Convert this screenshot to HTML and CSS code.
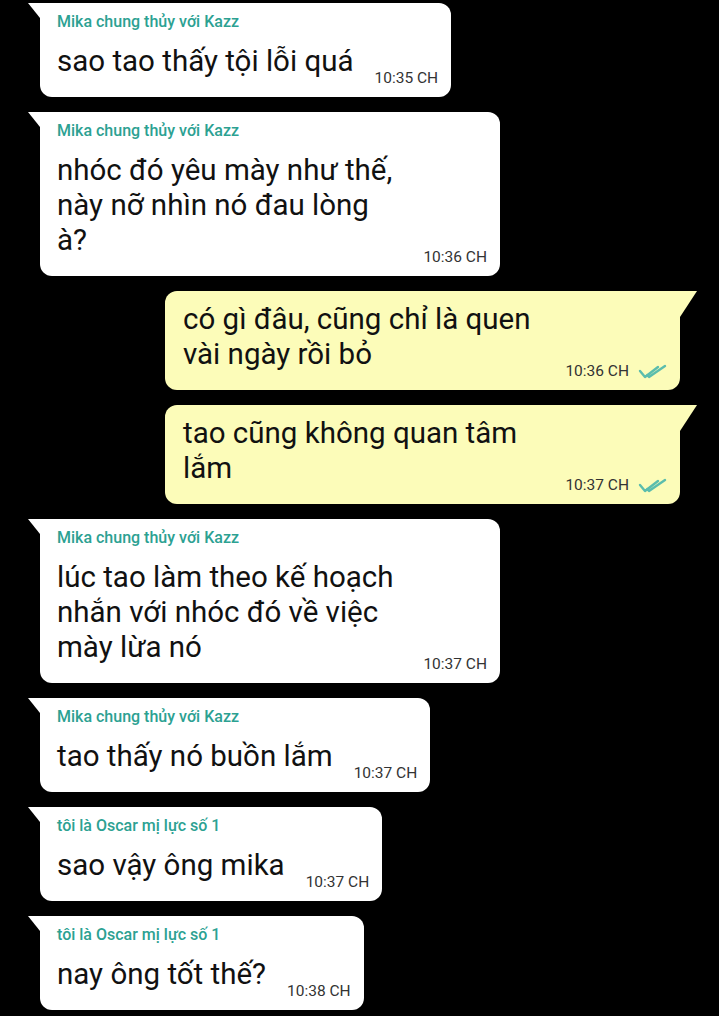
FILE: index.html
```html
<!DOCTYPE html>
<html lang="vi">

<head>
    <meta charset="UTF-8">
    <meta name="viewport" content="width=device-width, initial-scale=1.0">
    <title>Chat</title>
    <link rel="stylesheet" href="styles.css">
</head>

<body>
    <div class="chat">
        <div class="msg in">
            <div class="name">Mika chung thủy với Kazz</div>
            <div class="row">
                <div class="text">sao tao thấy tội lỗi quá</div>
                <span class="time">10:35 CH</span>
            </div>
        </div>

        <div class="msg in wide">
            <div class="name">Mika chung thủy với Kazz</div>
            <div class="row">
                <div class="text">nhóc đó yêu mày như thế,<br>này nỡ nhìn nó đau lòng<br>à?</div>
                <span class="time">10:36 CH</span>
            </div>
        </div>

        <div class="msg out wide">
            <div class="row">
                <div class="text">có gì đâu, cũng chỉ là quen<br>vài ngày rồi bỏ</div>
                <span class="time">10:36 CH
                    <svg class="check" width="30" height="16" viewBox="0 0 30 16">
                        <path d="M2 7 L7 13 L20 3 M9 11 L11 13 L27 2" />
                    </svg>
                </span>
            </div>
        </div>

        <div class="msg out wide">
            <div class="row">
                <div class="text">tao cũng không quan tâm<br>lắm</div>
                <span class="time">10:37 CH
                    <svg class="check" width="30" height="16" viewBox="0 0 30 16">
                        <path d="M2 7 L7 13 L20 3 M9 11 L11 13 L27 2" />
                    </svg>
                </span>
            </div>
        </div>

        <div class="msg in wide">
            <div class="name">Mika chung thủy với Kazz</div>
            <div class="row">
                <div class="text">lúc tao làm theo kế hoạch<br>nhắn với nhóc đó về việc<br>mày lừa nó</div>
                <span class="time">10:37 CH</span>
            </div>
        </div>

        <div class="msg in">
            <div class="name">Mika chung thủy với Kazz</div>
            <div class="row">
                <div class="text">tao thấy nó buồn lắm</div>
                <span class="time">10:37 CH</span>
            </div>
        </div>

        <div class="msg in">
            <div class="name">tôi là Oscar mị lực số 1</div>
            <div class="row">
                <div class="text">sao vậy ông mika</div>
                <span class="time">10:37 CH</span>
            </div>
        </div>

        <div class="msg in">
            <div class="name">tôi là Oscar mị lực số 1</div>
            <div class="row">
                <div class="text">nay ông tốt thế?</div>
                <span class="time">10:38 CH</span>
            </div>
        </div>
    </div>
</body>

</html>
```

FILE: styles.css
```css
body {
    font-family: 'Roboto', 'Noto Sans', Arial, sans-serif;
    margin: 0;
    padding: 0;
    background-color: #000;
    color: #111;
}

.chat {
    display: flex;
    flex-direction: column;
    gap: 15px;
    padding: 3px 39px 0 40px;
}

.msg {
    position: relative;
    box-sizing: border-box;
    background-color: #fff;
    border-radius: 12px;
    padding: 10px 13px 10px 17px;
}

.msg.in {
    align-self: flex-start;
    border-top-left-radius: 0;
}

.msg.in.wide {
    width: 460px;
}

.msg.out {
    align-self: flex-end;
    background-color: #fcfcb9;
    border-top-right-radius: 0;
    padding: 11px 12px 10px 18px;
}

.msg.out.wide {
    width: 515px;
}

/* little tails at the top corner */
.msg.in::before {
    content: "";
    position: absolute;
    left: -12px;
    top: 0;
    width: 12px;
    height: 15px;
    background-color: #fff;
    clip-path: polygon(0 0, 100% 0, 100% 100%);
}

.msg.out::before {
    content: "";
    position: absolute;
    right: -17px;
    top: 0;
    width: 17px;
    height: 26px;
    background-color: #fcfcb9;
    clip-path: polygon(0 0, 100% 0, 0 100%);
}

.name {
    color: #2ca192;
    font-size: 16px;
    font-weight: 500;
    line-height: 18px;
    margin-bottom: 13px;
}

.row {
    display: flex;
    align-items: flex-end;
    justify-content: space-between;
}

.text {
    font-size: 29.5px;
    line-height: 35px;
    color: #111;
    margin-bottom: 8px;
}

.time {
    display: flex;
    align-items: center;
    gap: 9px;
    margin-left: 21px;
    font-size: 15.5px;
    line-height: 17px;
    color: #333;
    white-space: nowrap;
}

.check {
    fill: none;
    stroke: #5bbdad;
    stroke-width: 2.4;
    stroke-linecap: round;
    stroke-linejoin: round;
}
```
